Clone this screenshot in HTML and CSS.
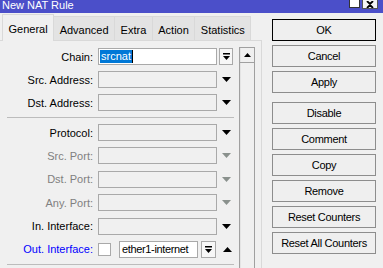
FILE: index.html
```html
<!DOCTYPE html>
<html>
<head>
<meta charset="utf-8">
<title>New NAT Rule</title>
<link rel="stylesheet" href="styles.css">
</head>
<body>
<div class="titlebar">
	<span class="title">New NAT Rule</span>
	<span class="win-btns">
		<span class="win-max"></span>
		<span class="win-close"><svg width="8" height="7" viewBox="0 0 8 7"><path d="M1 0L4 3L7 0M1 7L4 4L7 7" stroke="#000" stroke-width="1.8" fill="none"/></svg></span>
	</span>
</div>
<div class="main">
	<div class="left">
		<div class="tabs">
			<div class="tab active">General</div>
			<div class="tab">Advanced</div>
			<div class="tab">Extra</div>
			<div class="tab">Action</div>
			<div class="tab">Statistics</div>
		</div>
		<div class="panel">
			<div class="form">
				<div class="row">
					<div class="label">Chain:</div>
					<div class="field edit"><span class="sel">srcnat</span><span class="caret"></span></div>
					<div class="ddbtn"><svg width="7" height="7" viewBox="0 0 7 7"><rect x="0" y="0" width="7" height="1.5" fill="#000"/><polygon points="0,3 7,3 3.5,7" fill="#000"/></svg></div>
				</div>
				<div class="row">
					<div class="label">Src. Address:</div>
					<div class="field"></div>
					<div class="arrow"><svg width="9" height="5" viewBox="0 0 9 5"><polygon points="0,0 9,0 4.5,5" fill="#000"/></svg></div>
				</div>
				<div class="row">
					<div class="label">Dst. Address:</div>
					<div class="field"></div>
					<div class="arrow"><svg width="9" height="5" viewBox="0 0 9 5"><polygon points="0,0 9,0 4.5,5" fill="#000"/></svg></div>
				</div>
				<div class="sep"></div>
				<div class="row lower">
					<div class="label">Protocol:</div>
					<div class="field"></div>
					<div class="arrow"><svg width="9" height="5" viewBox="0 0 9 5"><polygon points="0,0 9,0 4.5,5" fill="#000"/></svg></div>
				</div>
				<div class="row lower">
					<div class="label muted">Src. Port:</div>
					<div class="field"></div>
					<div class="arrow"><svg width="9" height="5" viewBox="0 0 9 5"><polygon points="0,0 9,0 4.5,5" fill="#8a918d"/></svg></div>
				</div>
				<div class="row lower">
					<div class="label muted">Dst. Port:</div>
					<div class="field"></div>
					<div class="arrow"><svg width="9" height="5" viewBox="0 0 9 5"><polygon points="0,0 9,0 4.5,5" fill="#8a918d"/></svg></div>
				</div>
				<div class="row lower">
					<div class="label muted">Any. Port:</div>
					<div class="field"></div>
					<div class="arrow"><svg width="9" height="5" viewBox="0 0 9 5"><polygon points="0,0 9,0 4.5,5" fill="#8a918d"/></svg></div>
				</div>
				<div class="row lower">
					<div class="label">In. Interface:</div>
					<div class="field"></div>
					<div class="arrow"><svg width="9" height="5" viewBox="0 0 9 5"><polygon points="0,0 9,0 4.5,5" fill="#000"/></svg></div>
				</div>
				<div class="row lower">
					<div class="label blue">Out. Interface:</div>
					<div class="check"></div>
					<div class="field edit short">ether1-internet</div>
					<div class="ddbtn small"><svg width="7" height="7" viewBox="0 0 7 7"><rect x="0" y="0" width="7" height="1.5" fill="#000"/><polygon points="0,3 7,3 3.5,7" fill="#000"/></svg></div>
					<div class="arrow"><svg width="9" height="5" viewBox="0 0 9 5"><polygon points="0,5 9,5 4.5,0" fill="#000"/></svg></div>
				</div>
				<div class="sep"></div>
			</div>
			<div class="scrollbar">
				<div class="sb-up"><svg width="7" height="4" viewBox="0 0 7 4"><polygon points="0,4 7,4 3.5,0" fill="#000"/></svg></div>
			</div>
		</div>
	</div>
	<div class="actions">
		<div class="btn default">OK</div>
		<div class="btn">Cancel</div>
		<div class="btn">Apply</div>
		<div class="btn group">Disable</div>
		<div class="btn">Comment</div>
		<div class="btn">Copy</div>
		<div class="btn">Remove</div>
		<div class="btn">Reset Counters</div>
		<div class="btn">Reset All Counters</div>
	</div>
</div>
</body>
</html>
```

FILE: styles.css
```css
body {
	margin: 0;
	width: 383px;
	height: 268px;
	overflow: hidden;
	background: #f0f0f0;
	font-family: "Liberation Sans", Arial, sans-serif;
	font-size: 11px;
	color: #000;
}

/* window caption */
.titlebar {
	height: 13px;
	background: #4b4fc9;
	display: flex;
	color: #fff;
	overflow: hidden;
}

.title {
	line-height: 11px;
	padding-left: 2px;
}

.win-btns {
	margin-left: auto;
	display: flex;
	gap: 2px;
	padding-right: 5px;
}

.win-max {
	width: 11px;
	height: 8px;
	box-sizing: border-box;
	background: #fff;
	border: 1px solid #333;
	border-top: 0;
}

.win-close {
	width: 16px;
	height: 9px;
	box-sizing: border-box;
	background: #f4f4f4;
	border: 1px solid #555;
	border-top: 0;
	display: flex;
	align-items: center;
	justify-content: center;
}

.main {
	display: flex;
}

.left {
	width: 262px;
}

/* tabs */
.tabs {
	display: flex;
	align-items: flex-end;
	height: 27px;
	margin-top: 1px;
	padding-left: 2px;
}

.tab {
	height: 25px;
	box-sizing: border-box;
	padding: 7px 5.5px 0;
	line-height: 13px;
	background: #e3e3e3;
	border: 1px solid #d9d9d9;
	margin-right: -1px;
}

.tab.active {
	position: relative;
	z-index: 1;
	height: 27px;
	padding-top: 8px;
	background: #f0f0f0;
	border-bottom: 0;
}

.panel {
	margin-top: -1px;
	height: 240px;
	box-sizing: border-box;
	border-top: 1px solid #d9d9d9;
	border-right: 1px solid #d9d9d9;
	display: flex;
	padding-top: 6px;
}

/* form rows */
.form {
	width: 239px;
	margin-top: 1px;
}

.row {
	display: flex;
	align-items: center;
	height: 17px;
	margin-bottom: 6px;
}

.row.lower {
	margin-bottom: 6.4px;
}

.label {
	width: 93px;
	text-align: right;
	white-space: nowrap;
}

.label.muted {
	color: #808080;
}

.label.blue {
	color: #0000ff;
}

.field {
	margin-left: 5px;
	width: 119px;
	height: 17px;
	box-sizing: border-box;
	border: 1px solid #a9a9a9;
	background: #f0f0f0;
}

.field.edit {
	background: #fff;
	display: flex;
	align-items: center;
	padding-left: 1px;
	line-height: 13px;
}

.field.short {
	margin-left: 8px;
	width: 79px;
	padding-left: 2px;
	letter-spacing: -0.35px;
	white-space: nowrap;
	overflow: hidden;
}

.sel {
	background: #0078d7;
	color: #fff;
	padding: 0 1px;
}

.caret {
	width: 1px;
	height: 13px;
	background: #000;
}

.ddbtn {
	margin-left: 2px;
	width: 14px;
	height: 17px;
	box-sizing: border-box;
	border: 1px solid #a9a9a9;
	background: #f7f7f7;
	display: flex;
	align-items: center;
	justify-content: center;
}

.ddbtn.small {
	margin-left: 3px;
	width: 15px;
}

.arrow {
	width: 19px;
	display: flex;
	justify-content: center;
}

.row .ddbtn + .arrow {
	margin-left: 2px;
}

.check {
	margin-left: 5px;
	width: 13px;
	height: 13px;
	box-sizing: border-box;
	border: 1px solid #a9a9a9;
	background: #fff;
}

.sep {
	margin: 1px 0 6px 7px;
	width: 227px;
	border-top: 1px solid #bcbcbc;
}

/* scrollbar */
.scrollbar {
	width: 16px;
	box-sizing: border-box;
	border-left: 1px solid #a0a0a0;
	border-right: 1px solid #a0a0a0;
	box-shadow: inset 1px 0 #e4e4e4;
}

.sb-up {
	height: 16px;
	box-sizing: border-box;
	border-top: 1px solid #a0a0a0;
	border-bottom: 1px solid #a0a0a0;
	display: flex;
	align-items: center;
	justify-content: center;
}

/* buttons on the right */
.actions {
	margin-left: 10px;
	padding-top: 6px;
	width: 104px;
}

.btn {
	height: 22px;
	box-sizing: border-box;
	border: 1px solid #8d8d8d;
	background: #efefef;
	margin-bottom: 4px;
	display: flex;
	align-items: center;
	justify-content: center;
	letter-spacing: -0.3px;
	white-space: nowrap;
}

.btn.default {
	border-color: #000;
}

.btn.group {
	margin-top: 9px;
}
```
